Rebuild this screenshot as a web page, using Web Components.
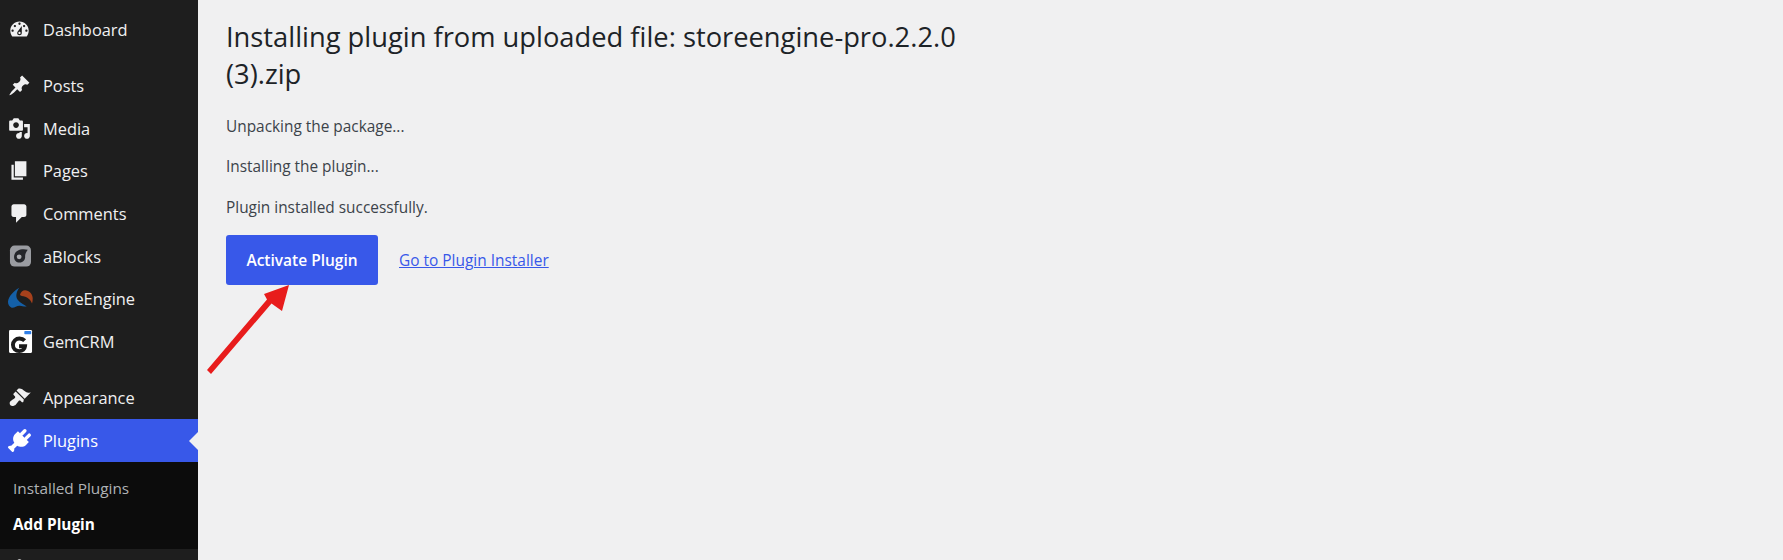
<!DOCTYPE html>
<html lang="en"><head><meta charset="utf-8"><title>Installing plugin</title>
<style>
html,body{margin:0;padding:0;height:560px;overflow:hidden;background:#f0f0f1;}
body{font-family:"Open Sans","Noto Sans",sans-serif;}
</style></head>
<body>
<wp-shell>
  <wp-sidebar slot="side">
    <wp-menu-item icon="dashboard" label="Dashboard"></wp-menu-item>
    <wp-menu-item icon="post" label="Posts" sep="13.5"></wp-menu-item>
    <wp-menu-item icon="media" label="Media"></wp-menu-item>
    <wp-menu-item icon="page" label="Pages"></wp-menu-item>
    <wp-menu-item icon="comments" label="Comments"></wp-menu-item>
    <wp-menu-item icon="ablocks" label="aBlocks"></wp-menu-item>
    <wp-menu-item icon="storeengine" label="StoreEngine"></wp-menu-item>
    <wp-menu-item icon="gemcrm" label="GemCRM"></wp-menu-item>
    <wp-menu-item icon="appearance" label="Appearance" sep="14.3" tight></wp-menu-item>
    <wp-menu-item icon="plugins" label="Plugins" current></wp-menu-item>
    <wp-submenu>
      <wp-sub-item label="Installed Plugins"></wp-sub-item>
      <wp-sub-item label="Add Plugin" current></wp-sub-item>
    </wp-submenu>
    <wp-menu-item icon="users" peek></wp-menu-item>
  </wp-sidebar>
  <wp-install-panel>
    <span slot="title">Installing plugin from uploaded file: storeengine-pro.2.2.0 (3).zip</span>
    <p>Unpacking the package...</p>
    <p>Installing the plugin...</p>
    <p>Plugin installed successfully.</p>
    <wp-button slot="actions">Activate Plugin</wp-button>
    <wp-link slot="actions">Go to Plugin Installer</wp-link>
  </wp-install-panel>
</wp-shell>
<red-arrow></red-arrow>
<script>
const ICONS={
dashboard:'<path fill="#f0f0f1" fill-rule="evenodd" d="M3.76 16h12.48c1.1-1.37 1.76-3.11 1.76-5 0-4.42-3.58-8-8-8s-8 3.58-8 8c0 1.89.66 3.63 1.76 5zM10 4c.55 0 1 .45 1 1s-.45 1-1 1-1-.45-1-1 .45-1 1-1zM6 6c.55 0 1 .45 1 1s-.45 1-1 1-1-.45-1-1 .45-1 1-1zm8 0c.55 0 1 .45 1 1s-.45 1-1 1-1-.45-1-1 .45-1 1-1zm-5.37 5.55L12 7v6c0 1.1-.9 2-2 2s-2-.9-2-2c0-.57.24-1.08.63-1.45zM4 10c.55 0 1 .45 1 1s-.45 1-1 1-1-.45-1-1 .45-1 1-1zm12 0c.55 0 1 .45 1 1s-.45 1-1 1-1-.45-1-1 .45-1 1-1zm-5 3c0-.55-.45-1-1-1s-1 .45-1 1 .45 1 1 1 1-.45 1-1z"/>',
post:'<path fill="#f0f0f1" d="M10.44 3.02l1.82-1.82 6.36 6.35-1.83 1.82c-1.05-.68-2.48-.57-3.41.36l-.75.75c-.92.93-1.04 2.35-.35 3.41l-1.83 1.82-2.41-2.41-2.8 2.79c-.42.42-3.38 2.71-3.8 2.29s1.86-3.39 2.28-3.81l2.79-2.79L4.1 9.36l1.83-1.82c1.05.69 2.48.57 3.4-.36l.75-.75c.93-.92 1.05-2.35.36-3.41z"/>',
media:'<path fill="#f0f0f1" fill-rule="evenodd" d="M13 11V4c0-.55-.45-1-1-1h-1.67L9 1H5L3.67 3H2c-.55 0-1 .45-1 1v7c0 .55.45 1 1 1h10c.55 0 1-.45 1-1zM7 4.5c1.38 0 2.5 1.12 2.5 2.5S8.38 9.5 7 9.5 4.5 8.38 4.5 7 5.62 4.5 7 4.5zM14 6h5v10.5c0 1.38-1.12 2.5-2.5 2.5S14 17.88 14 16.5s1.12-2.5 2.5-2.5c.17 0 .34.02.5.05V9h-3V6zm-4 8.05V13h2v3.5c0 1.38-1.12 2.5-2.5 2.5S7 17.88 7 16.5 8.12 14 9.5 14c.17 0 .34.02.5.05z"/>',
page:'<path fill="#f0f0f1" d="M6 15V2h10v13H6zm-1 1h8v2H3V5h2v11z"/>',
comments:'<path fill="#f0f0f1" d="M5 2h9c1.1 0 2 .9 2 2v7c0 1.1-.9 2-2 2h-2l-5 5v-5H5c-1.1 0-2-.9-2-2V4c0-1.1.9-2 2-2z"/>',
appearance:'<path fill="#f0f0f1" d="M14.48 11.06L7.41 3.99l1.5-1.5c.5-.56 2.3-.47 3.51.32 1.21.8 1.43 1.28 2.91 2.1 1.18.64 2.45 1.26 4.45.85zm-.71.71L6.7 4.7 4.93 6.47c-.39.39-.39 1.02 0 1.41l1.06 1.06c.39.39.39 1.03 0 1.42-.6.6-1.43 1.11-2.21 1.69-.35.26-.7.53-1.01.84C1.43 13.23.91 15.5 2.1 16.69c1.19 1.19 3.46.67 4.8-.67.31-.31.58-.66.84-1.01.58-.78 1.09-1.61 1.69-2.21.39-.39 1.02-.39 1.41 0l1.06 1.06c.39.39 1.02.39 1.41 0z"/>',
plugins:'<g fill="#fff" transform="rotate(45 10 10)"><rect x="5.800" y="-.8" width="3" height="7" rx="1.500"/><rect x="11.200" y="-.8" width="3" height="7" rx="1.500"/><path d="M3.300 5.200h13.400v3.500c0 3.200-2.500 5.400-4.900 5.900v3.800c.9.500 1.400 1.100 1.400 2.300 0 .5-.3.800-.9.800H7.700c-.6 0-.9-.3-.9-.8 0-1.200.5-1.800 1.400-2.300v-3.800c-2.400-.5-4.900-2.700-4.900-5.900z"/></g>',
users:'<path fill="#f0f0f1" d="M10 9.25c-2.27 0-2.73-3.44-2.73-3.44C7 4.02 7.82 2 9.97 2c2.16 0 2.98 2.02 2.71 3.81 0 0-.41 3.44-2.68 3.44zm0 2.57L12.72 10c2.39 0 4.52 2.33 4.52 4.53v2.49s-3.65 1.13-7.24 1.13c-3.65 0-7.24-1.13-7.24-1.13v-2.49c0-2.25 1.94-4.48 4.47-4.48z"/>',
ablocks:'<rect x="1.700" y=".5" width="18.300" height="18.300" rx="4" fill="#9a9ca1"/><path fill="#24262a" d="M17.200 4.200c-4.700-1.200-10.700-.2-11.800 4.900-.7 3.500 1.600 6.300 4.700 6.200 3.300-.1 5-2.600 4.800-5.300-.1-2 .9-4 2.300-5.800z"/><circle cx="9.700" cy="10.300" r="2.100" fill="#a9abaf"/>',
storeengine:'<path fill="#1460a8" d="M9.800.7C5 3.600.4 8 0 12.900c-.1 2.500 1.300 4.600 3.200 5.100 2.300.5 4.700-2 7.200-1.600 1.700.2 3.600.8 5.900.6-1.800-1.500-5.800-3.200-7.900-5.900C6.100 8 7.700 3.700 9.800.7z"/><path fill="#a6411c" d="M10.400 7c.6-2.500 2.400-4.200 4.400-4.200 3.600 0 6.800 3.400 6.700 7.300 0 1.600-.2 3.100-.6 4.200-.8-2.200-2.300-4-4.400-5.200-2-1.100-4.100-.7-6.100-2.100z"/>',
gemcrm:'<rect x=".9" y="0" width="20" height="20" rx="1" fill="#fff"/><rect x="14.200" y=".9" width="6" height="2.700" rx=".6" fill="#2f7fe8"/><path fill="none" stroke="#1b1b1b" stroke-width="3.400" d="M14.500 9.300c-1.100-1.200-2.700-1.900-4.500-1.900-3.200 0-5.700 2.400-5.700 5.500 0 3.100 2.400 5.500 5.500 5.500 2.700 0 4.700-1.700 5-4.300H9.600"/>'
};
function def(name,html){
  customElements.define(name,class extends HTMLElement{
    connectedCallback(){ if(this.shadowRoot)return; const r=this.attachShadow({mode:'open'}); r.innerHTML=typeof html==='function'?html(this):html; }
  });
}
def('wp-shell',`<style>:host{display:grid;grid-template-columns:198px 1fr;height:560px;overflow:hidden}</style><slot name="side"></slot><slot></slot>`);
def('wp-sidebar',`<style>:host{display:block;background:#1e1e1e;height:560px;padding-top:8px;box-sizing:border-box;overflow:hidden}</style><slot></slot>`);
def('wp-menu-item',el=>{
  const cur=el.hasAttribute('current'),peek=el.hasAttribute('peek'),label=el.getAttribute('label');
  const sep=el.getAttribute('sep'),h=cur?43.65:el.hasAttribute('tight')?41.85:42.65;
  return `<style>
  :host{display:flex;align-items:${peek?'flex-start':'center'};height:${h}px;position:relative;color:#f0f0f1;font-size:16.4px;${cur?'background:#3858e9;color:#fff;':''}${sep?`margin-top:${sep}px;`:''}}
  svg{width:23px;height:23px;margin-left:8px;flex:none;overflow:visible;${peek?'margin-top:8px;':''}}
  span{margin-left:12px;white-space:nowrap}
  ${cur?':host::after{content:"";position:absolute;right:0;top:50%;margin-top:-9px;border:9px solid transparent;border-right-color:#f0f0f1;border-left:0}':''}
  </style><svg viewBox="0 0 20 20" aria-hidden="true">${ICONS[el.getAttribute('icon')]}</svg>${label?`<span>${label}</span>`:''}`;
});
def('wp-submenu',`<style>:host{display:flex;flex-direction:column;background:#0c0c0c;padding:8.8px 0 6.5px}</style><slot></slot>`);
def('wp-sub-item',el=>`<style>:host{display:block;height:35.5px;line-height:35.5px;padding-left:13px;font-size:15.35px;white-space:nowrap;color:${el.hasAttribute('current')?'#fff':'#b0b3b6'};font-weight:${el.hasAttribute('current')?700:400}}</style>${el.getAttribute('label')}`);
def('wp-install-panel',`<style>
:host{display:block;padding:18px 0 0 28px;color:#3c434a;font-size:15.4px}
h1{margin:0 0 25px;width:760px;font-size:27.3px;font-weight:400;line-height:37px;color:#1d2327}
.log{display:flex;flex-direction:column;gap:20.4px;line-height:20px}
::slotted(p){margin:0}
.actions{display:flex;align-items:center;gap:21px;margin-top:17px}
</style><h1><slot name="title"></slot></h1><div class="log"><slot></slot></div><div class="actions"><slot name="actions"></slot></div>`);
def('wp-button',`<style>:host{display:flex;align-items:center;justify-content:center;width:152px;height:50px;box-sizing:border-box;background:#3858e9;border-radius:3px;color:#fff;font-size:15.5px;font-weight:600;white-space:nowrap}</style><slot></slot>`);
def('wp-link',`<style>:host{display:inline-block;color:#3858e9;text-decoration:underline;font-size:15.45px;white-space:nowrap}</style><slot></slot>`);
def('red-arrow',`<style>:host{position:absolute;left:200px;top:280px;width:100px;height:100px;display:block;pointer-events:none}svg{display:block}</style><svg width="100" height="100" viewBox="200 280 100 100"><polygon fill="#e81c1c" points="207,370 211,374 271.5,303.5 282,311 289,285 264,294 267,299.5"/></svg>`);
</script>
</body></html>
